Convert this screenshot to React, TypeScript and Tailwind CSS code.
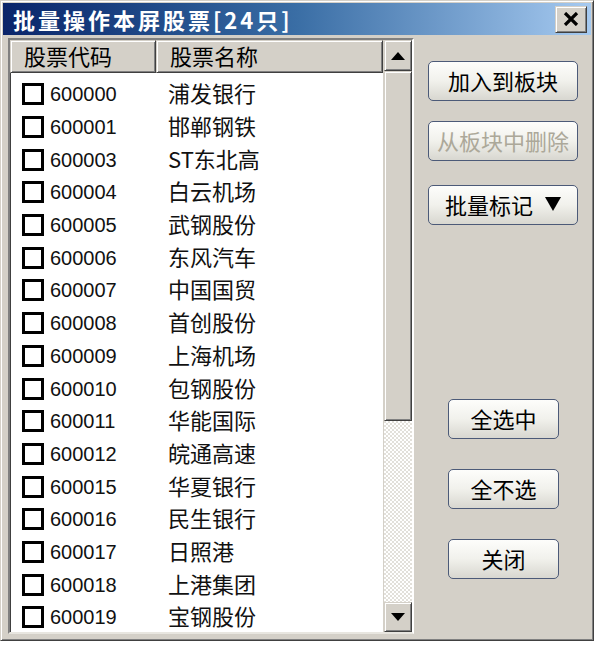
import React from 'react';

const stocks: [string, string][] = [
  ['600000', '浦发银行'],
  ['600001', '邯郸钢铁'],
  ['600003', 'ST东北高'],
  ['600004', '白云机场'],
  ['600005', '武钢股份'],
  ['600006', '东风汽车'],
  ['600007', '中国国贸'],
  ['600008', '首创股份'],
  ['600009', '上海机场'],
  ['600010', '包钢股份'],
  ['600011', '华能国际'],
  ['600012', '皖通高速'],
  ['600015', '华夏银行'],
  ['600016', '民生银行'],
  ['600017', '日照港'],
  ['600018', '上港集团'],
  ['600019', '宝钢股份'],
];

const cjk = "font-['Noto_Sans_CJK_SC',sans-serif]";
const raised =
  'border border-t-[#d4d0c8] border-l-[#d4d0c8] border-r-[#404040] border-b-[#404040] shadow-[inset_1px_1px_0_#fff,inset_-1px_-1px_0_#808080]';

function XpButton({ label, width, disabled }: { label: React.ReactNode; width: string; disabled?: boolean }) {
  return (
    <button
      className={`${width} h-[40px] flex items-center justify-center rounded-[5px] border border-[#4c5a78] bg-linear-to-b from-[#fdfdfb] via-[#f1f1ec] to-[#d8d7d0] text-[22px] leading-none pb-[2px] ${cjk} ${
        disabled ? 'text-[#aca899]' : 'text-black'
      }`}
    >
      {label}
    </button>
  );
}

export default function App() {
  return (
    <div className="w-[600px] h-[648px] bg-white">
      <div className={`w-[594px] h-[641px] bg-[#d4d0c8] p-[2px] flex flex-col ${raised}`}>
        {/* title bar */}
        <div className="h-[32px] flex items-center justify-between bg-linear-to-r from-[#0a246a] via-[#3a6ea5] to-[#a6caf0] pl-[10px] pr-[4px]">
          <span className={`text-white font-bold text-[22px] tracking-[3px] leading-none ${cjk}`}>批量操作本屏股票[24只]</span>
          <button className={`w-[32px] h-[27px] bg-[#d4d0c8] flex items-center justify-center ${raised}`}>
            <svg width="16" height="14" viewBox="0 0 16 14">
              <path d="M2 1 L14 13 M14 1 L2 13" stroke="#000" strokeWidth="3.2" />
            </svg>
          </button>
        </div>

        {/* body */}
        <div className="flex flex-1 pt-[3px] pl-[5px]">
          {/* list box */}
          <div className="w-[406px] h-[596px] border-2 border-t-[#808080] border-l-[#808080] border-r-white border-b-[#e8e6e0] shadow-[inset_1px_1px_0_#404040] bg-white flex overflow-hidden">
            <div className="flex-1 flex flex-col overflow-hidden">
              <div className="h-[33px] flex shrink-0">
                <div className={`w-[146px] flex items-center pl-[13px] pb-[3px] bg-[#d4d0c8] ${raised}`}>
                  <span className={`text-[22px] leading-none ${cjk}`}>股票代码</span>
                </div>
                <div className={`flex-1 flex items-center pl-[13px] pb-[3px] bg-[#d4d0c8] ${raised}`}>
                  <span className={`text-[22px] leading-none ${cjk}`}>股票名称</span>
                </div>
              </div>
              <div className="pt-[5px]">
                {stocks.map(([code, name]) => (
                  <div key={code} className="h-[32.7px] flex items-center">
                    <div className="w-[146px] flex items-center pl-[12px]">
                      <div className="w-[22px] h-[22px] border-[3px] border-black bg-white shrink-0" />
                      <span className="ml-[6px] text-[20px] leading-none text-[#111] font-['Liberation_Sans',sans-serif]">{code}</span>
                    </div>
                    <span className={`pl-[12px] mb-[4px] text-[22px] leading-none text-[#111] ${cjk}`}>{name}</span>
                  </div>
                ))}
              </div>
            </div>

            {/* scrollbar */}
            <div className="w-[29px] flex flex-col border-l border-[#d4d0c8]">
              <div className={`h-[31px] bg-[#d4d0c8] flex items-center justify-center shrink-0 ${raised}`}>
                <svg width="14" height="8" viewBox="0 0 14 8">
                  <path d="M0 8 L7 0 L14 8 Z" fill="#000" />
                </svg>
              </div>
              <div className={`h-[350px] bg-[#d4d0c8] shrink-0 ${raised}`} />
              <div className="flex-1 bg-[repeating-conic-gradient(#ffffff_0%_25%,#e2e0da_0%_50%)] bg-[length:4px_4px]" />
              <div className={`h-[30px] bg-[#d4d0c8] flex items-center justify-center shrink-0 ${raised}`}>
                <svg width="14" height="8" viewBox="0 0 14 8">
                  <path d="M0 0 L7 8 L14 0 Z" fill="#000" />
                </svg>
              </div>
            </div>
          </div>

          {/* buttons */}
          <div className="flex-1 flex flex-col pl-[14px]">
            <div className="flex flex-col gap-[20px] pt-[23px]">
              <XpButton label="加入到板块" width="w-[150px]" />
              <XpButton label="从板块中删除" width="w-[150px]" disabled />
            </div>
            <div className="pt-[24px]">
              <XpButton
                width="w-[150px]"
                label={
                  <span className="flex items-center gap-[12px]">
                    批量标记
                    <svg width="16" height="14" viewBox="0 0 16 14">
                      <path d="M0 0 L16 0 L8 14 Z" fill="#000" />
                    </svg>
                  </span>
                }
              />
            </div>
            <div className="flex flex-col gap-[30px] pt-[174px] pl-[20px]">
              <XpButton label="全选中" width="w-[111px]" />
              <XpButton label="全不选" width="w-[111px]" />
              <XpButton label="关闭" width="w-[111px]" />
            </div>
          </div>
        </div>
      </div>
    </div>
  );
}
